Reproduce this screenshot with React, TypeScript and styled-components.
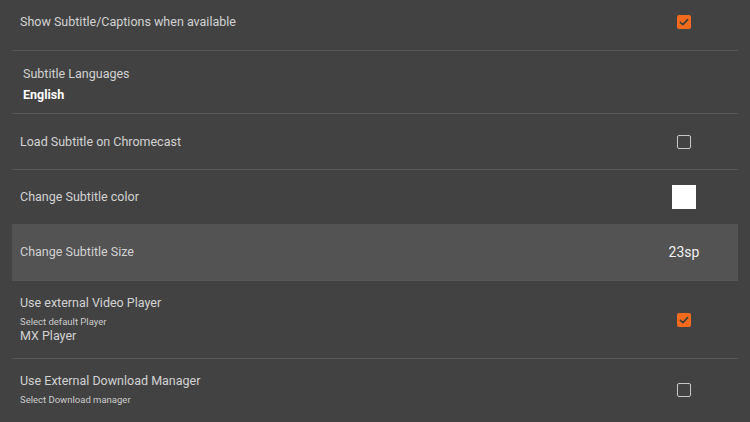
import styled, { createGlobalStyle } from "styled-components";

const GlobalStyle = createGlobalStyle`
  html, body {
    margin: 0;
    padding: 0;
    background: #424242;
    font-family: Roboto, "Noto Sans", "Liberation Sans", sans-serif;
  }
`;

interface SettingItem {
  title: string;
  sub?: string;
  value?: string;
  valueStrong?: boolean;
  control?: "checked" | "unchecked" | "color" | "size";
  height?: number;
  selected?: boolean;
  indent?: number;
}

const items: SettingItem[] = [
  { title: "Show Subtitle/Captions when available", control: "checked", height: 57 },
  { title: "Subtitle Languages", value: "English", valueStrong: true, height: 63, indent: 11 },
  { title: "Load Subtitle on Chromecast", control: "unchecked", height: 56 },
  { title: "Change Subtitle color", control: "color", height: 55 },
  { title: "Change Subtitle Size", control: "size", height: 57, selected: true },
  { title: "Use external Video Player", sub: "Select default Player", value: "MX Player", control: "checked" },
  { title: "Use External Download Manager", sub: "Select Download manager", control: "unchecked" },
];

const Checkbox = ({ checked }: { checked: boolean }) =>
  checked ? (
    <CheckedBox>
      <svg width="14" height="14" viewBox="0 0 14 14">
        <path d="M3.4 7.3 L5.9 9.6 L10.6 4.6" fill="none" stroke="#3d3d3d" strokeWidth="1.6" strokeLinecap="round" strokeLinejoin="round" />
      </svg>
    </CheckedBox>
  ) : (
    <EmptyBox />
  );

const renderControl = (control?: SettingItem["control"]) => {
  switch (control) {
    case "checked":
      return <Checkbox checked />;
    case "unchecked":
      return <Checkbox checked={false} />;
    case "color":
      return <ColorSwatch />;
    case "size":
      return <SizeText>23sp</SizeText>;
    default:
      return null;
  }
};

const App = () => {
  return (
    <>
      <GlobalStyle />
      <Page>
        <List>
          {items.map((item) => (
            <Row key={item.title} $height={item.height} $selected={item.selected} $indent={item.indent}>
              <TextBlock $padded={!item.height} $shift={item.valueStrong}>
                <Title>{item.title}</Title>
                {item.sub && <Sub>{item.sub}</Sub>}
                {item.value && <Value $strong={item.valueStrong}>{item.value}</Value>}
              </TextBlock>
              <Control>{renderControl(item.control)}</Control>
            </Row>
          ))}
        </List>
      </Page>
    </>
  );
};

const Page = styled.div`
  width: 750px;
  height: 422px;
  overflow: hidden;
  background: #424242;
`;

const List = styled.div`
  margin: -6px 12px 0;
  display: flex;
  flex-direction: column;
`;

const Row = styled.div<{ $height?: number; $selected?: boolean; $indent?: number }>`
  box-sizing: border-box;
  display: flex;
  align-items: center;
  height: ${({ $height }) => ($height ? `${$height}px` : "auto")};
  padding-left: ${({ $indent }) => $indent ?? 8}px;
  border-bottom: 1px solid #575757;
  background: ${({ $selected }) => ($selected ? "#535353" : "transparent")};
  margin-top: ${({ $selected }) => ($selected ? "-1px" : "0")};

  &:last-child {
    border-bottom: none;
  }
`;

const TextBlock = styled.div<{ $padded: boolean; $shift?: boolean }>`
  flex: 1;
  display: flex;
  flex-direction: column;
  padding: ${({ $padded, $shift }) => ($padded ? "12px 0 14px" : $shift ? "5px 0 0" : "0")};
`;

const Title = styled.div`
  font-size: 12.5px;
  line-height: 20px;
  color: #d2d2d2;
`;

const Sub = styled.div`
  font-size: 9.5px;
  line-height: 12px;
  margin-top: 3px;
  color: #cccccc;
`;

const Value = styled.div<{ $strong?: boolean }>`
  font-size: 12.5px;
  font-weight: ${({ $strong }) => ($strong ? 700 : 400)};
  line-height: ${({ $strong }) => ($strong ? "21px" : "16px")};
  color: ${({ $strong }) => ($strong ? "#ffffff" : "#d2d2d2")};
`;

const Control = styled.div`
  width: 48px;
  margin-right: 30px;
  display: flex;
  justify-content: center;
  align-items: center;
`;

const CheckedBox = styled.div`
  width: 14px;
  height: 14px;
  border-radius: 2px;
  background: #f26b1d;
  display: flex;
`;

const EmptyBox = styled.div`
  box-sizing: border-box;
  width: 14px;
  height: 14px;
  border-radius: 2px;
  border: 1.5px solid #c9c9c9;
`;

const ColorSwatch = styled.div`
  width: 24px;
  height: 24px;
  background: #ffffff;
`;

const SizeText = styled.div`
  font-size: 14px;
  color: #f0f0f0;
`;

export default App;
